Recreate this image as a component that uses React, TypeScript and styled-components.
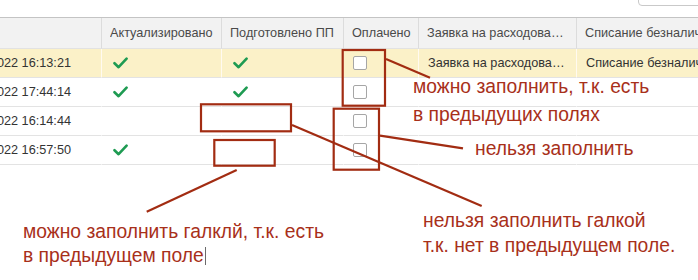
import { FC } from "react";
import styled, { createGlobalStyle } from "styled-components";

const GlobalStyle = createGlobalStyle`
    html, body {
        margin: 0;
        padding: 0;
        background: #ffffff;
    }
    body {
        font-family: "Liberation Sans", Arial, sans-serif;
    }
`;

const Page = styled.div`
    position: relative;
    width: 698px;
    height: 280px;
    overflow: hidden;
    background: #ffffff;
`;

const TopBar = styled.div`
    height: 17px;
    display: flex;
    justify-content: flex-end;
`;

const SearchBox = styled.div`
    width: 80px;
    height: 20px;
    margin-top: -14px;
    margin-right: -20px;
    border: 1px solid #c9c9c9;
    border-radius: 4px;
    box-sizing: border-box;
`;

const Grid = styled.div`
    display: grid;
    grid-template-columns: 102px 120px 122px 75px 158px 200px;
    width: 777px;
    border-top: 1px solid #c4c4c4;
    font-size: 12.7px;
`;

const HeadCell = styled.div`
    height: 30px;
    display: flex;
    align-items: center;
    padding: 0 6px 0 8px;
    background: #f2f2f2;
    border-right: 1px solid #dcdcdc;
    border-bottom: 1px solid #e2e2e2;
    color: #4a4a4a;
    white-space: nowrap;
    overflow: hidden;
    min-width: 0;

    span {
        overflow: hidden;
        text-overflow: ellipsis;
    }
`;

const Cell = styled.div<{ $current?: boolean }>`
    height: 28px;
    display: flex;
    align-items: center;
    padding: 0 9px;
    background: ${(p) => (p.$current ? "#fbf1c8" : "#ffffff")};
    border-right: 1px solid ${(p) => (p.$current ? "#fffaf0" : "#ffffff")};
    border-bottom: 1px solid #e3e3e3;
    color: #333333;
    white-space: nowrap;
    overflow: hidden;
    min-width: 0;

    span {
        overflow: hidden;
        text-overflow: ellipsis;
    }
`;

const DateCell = styled(Cell)`
    justify-content: flex-end;
    padding: 0 30px 0 0;
`;

const CheckCell = styled(Cell)`
    padding-left: 11px;
`;

const BoxCell = styled(Cell)`
    padding-left: 9px;
`;

const CheckBox = styled.div`
    width: 14px;
    height: 14px;
    box-sizing: border-box;
    border: 1px solid #a6a6a6;
    border-radius: 2px;
    background: #ffffff;
`;

const Overlay = styled.svg`
    position: absolute;
    left: 0;
    top: 0;
    pointer-events: none;
`;

const Note = styled.div<{ $x: number; $y: number; $lh: number }>`
    position: absolute;
    left: ${(p) => p.$x}px;
    top: ${(p) => p.$y}px;
    font-family: "Liberation Sans", Arial, sans-serif;
    font-size: 19.3px;
    line-height: ${(p) => p.$lh}px;
    color: #a8301a;
    white-space: nowrap;
`;

const Caret = styled.span`
    display: inline-block;
    width: 1px;
    height: 18px;
    margin-left: 1px;
    vertical-align: -3px;
    background: #6a6a6a;
`;

const Check: FC = () => (
    <svg width="15" height="12" viewBox="0 0 15 12">
        <path d="M1.5 6.2 L5.6 10.2 L13.6 1.6" fill="none" stroke="#1e9b52" strokeWidth="2.6" strokeLinecap="round" strokeLinejoin="round" />
    </svg>
);

type Row = {
    date: string;
    actual: boolean;
    prepared: boolean;
    request?: string;
    writeOff?: string;
};

const rows: Row[] = [
    { date: "14.03.2022 16:13:21", actual: true, prepared: true, request: "Заявка на расходование денежных средств", writeOff: "Списание безналичных денежных средств" },
    { date: "15.03.2022 17:44:14", actual: true, prepared: true },
    { date: "16.03.2022 16:14:44", actual: false, prepared: false },
    { date: "17.03.2022 16:57:50", actual: true, prepared: false },
];

const RED = "#a22c12";

export default function App() {
    return (
        <Page>
            <GlobalStyle />
            <TopBar>
                <SearchBox />
            </TopBar>
            <Grid>
                <HeadCell />
                <HeadCell><span>Актуализировано</span></HeadCell>
                <HeadCell><span>Подготовлено ПП</span></HeadCell>
                <HeadCell><span>Оплачено</span></HeadCell>
                <HeadCell><span>Заявка на расходование денежных средств</span></HeadCell>
                <HeadCell><span>Списание безналичных денежных средств</span></HeadCell>
                {rows.map((r, i) => {
                    const cur = i === 0;
                    return [
                        <DateCell key={`d${i}`} $current={cur}>{r.date}</DateCell>,
                        <CheckCell key={`a${i}`} $current={cur}>{r.actual && <Check />}</CheckCell>,
                        <CheckCell key={`p${i}`} $current={cur}>{r.prepared && <Check />}</CheckCell>,
                        <BoxCell key={`o${i}`} $current={cur}><CheckBox /></BoxCell>,
                        <Cell key={`r${i}`} $current={cur}><span>{r.request}</span></Cell>,
                        <Cell key={`w${i}`} $current={cur}><span>{r.writeOff}</span></Cell>,
                    ];
                })}
            </Grid>

            <Overlay width="698" height="280" viewBox="0 0 698 280">
                <g fill="none" stroke={RED} strokeWidth="2.2">
                    <rect x="342.7" y="50" width="42.3" height="55.7" />
                    <rect x="333.7" y="108.7" width="45.3" height="61" />
                    <rect x="201" y="104.3" width="90" height="27" />
                    <rect x="214.3" y="140" width="60.4" height="25.7" />
                    <line x1="386" y1="59" x2="430" y2="77.7" />
                    <line x1="380" y1="135.7" x2="463" y2="148.3" />
                    <line x1="292" y1="125" x2="481.7" y2="206" />
                    <line x1="236.7" y1="170" x2="146.7" y2="211.7" />
                </g>
            </Overlay>

            <Note $x={413} $y={73} $lh={28}>
                можно заполнить, т.к. есть<br />
                в предыдущих полях
            </Note>
            <Note $x={475} $y={136} $lh={25}>
                нельзя заполнить
            </Note>
            <Note $x={423} $y={207.5} $lh={25}>
                нельзя заполнить галкой<br />
                т.к. нет в предыдущем поле.
            </Note>
            <Note $x={23} $y={220} $lh={24}>
                можно заполнить галклй, т.к. есть<br />
                в предыдущем поле<Caret />
            </Note>
        </Page>
    );
}
